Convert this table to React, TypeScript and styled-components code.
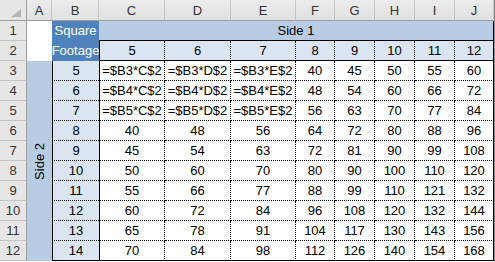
import React from 'react';
import styled, { createGlobalStyle } from 'styled-components';

const GlobalStyle = createGlobalStyle`
    html, body {
        margin: 0;
        padding: 0;
        background: #ffffff;
    }
    * {
        box-sizing: border-box;
    }
`

const Frame = styled.div`
    width: 495px;
    height: 262px;
    overflow: hidden;
    border-right: 1px solid #8c8c8c;
    background: #ffffff;
`

const Sheet = styled.div`
    display: grid;
    grid-template-columns: 27px 25px 47px 66px 66px 65px 39px 40px 40px 40px 39px;
    grid-template-rows: 21px repeat(12, 20px);
    font-family: "Liberation Sans", Arial, sans-serif;
    font-size: 13px;
    color: #000000;
`

type Place = { $row: number; $col: number };

const Corner = styled.div`
    position: relative;
    grid-row: 1;
    grid-column: 1;
    background: #e6e6e6;
    border-right: 1px solid #9e9e9e;
    border-bottom: 1px solid #9e9e9e;
`

const CornerMark = styled.span`
    position: absolute;
    right: 5px;
    bottom: 3px;
    width: 0;
    height: 0;
    border-left: 10px solid transparent;
    border-bottom: 8px solid #b4b4b4;
`

const ColHead = styled.div<{ $col: number }>`
    grid-row: 1;
    grid-column: ${p => p.$col};
    display: flex;
    align-items: center;
    justify-content: center;
    background: linear-gradient(#ececec, #e0e0e0);
    border-right: 1px solid #c4c4c4;
    border-bottom: 1px solid #9e9e9e;
    color: #333333;
`

const RowHead = styled.div<{ $row: number }>`
    grid-column: 1;
    grid-row: ${p => p.$row};
    display: flex;
    align-items: center;
    justify-content: center;
    background: #e6e6e6;
    border-right: 1px solid #9e9e9e;
    border-bottom: 1px solid #c4c4c4;
    color: #333333;
`

const Blank = styled.div`
    grid-column: 2;
    grid-row: 2 / span 2;
    background: #ffffff;
`

const Title = styled.div`
    grid-column: 3;
    grid-row: 2 / span 2;
    display: flex;
    flex-direction: column;
    align-items: center;
    background: #4f81bd;
    color: #ffffff;
    line-height: 20px;
`

const TopBand = styled.div`
    grid-column: 4 / span 8;
    grid-row: 2;
    display: flex;
    align-items: center;
    justify-content: center;
    background: #b8cce4;
    border-bottom: 1px solid #000000;
    border-right: 1px solid #000000;
`

const SideBand = styled.div`
    grid-column: 2;
    grid-row: 4 / span 10;
    display: flex;
    align-items: center;
    justify-content: center;
    background: #b8cce4;
`

const SideLabel = styled.span`
    writing-mode: vertical-rl;
    transform: rotate(180deg);
`

const AxisTop = styled.div<{ $col: number; $first?: boolean; $last?: boolean }>`
    grid-row: 3;
    grid-column: ${p => p.$col};
    display: flex;
    align-items: center;
    justify-content: center;
    background: #dbe5f1;
    border-bottom: 1px solid #000000;
    border-left: ${p => (p.$first ? '1px solid #000000' : 'none')};
    border-right: ${p => (p.$last ? '1px solid #000000' : '1px dotted #000000')};
`

const AxisSide = styled.div<{ $row: number; $last?: boolean }>`
    grid-column: 3;
    grid-row: ${p => p.$row};
    display: flex;
    align-items: center;
    justify-content: center;
    background: #dbe5f1;
    border-left: 1px solid #000000;
    border-bottom: ${p => (p.$last ? '1px solid #000000' : '1px dotted #000000')};
`

const DataCell = styled.div<Place & { $first?: boolean; $lastCol?: boolean; $lastRow?: boolean }>`
    grid-row: ${p => p.$row};
    grid-column: ${p => p.$col};
    display: flex;
    align-items: center;
    justify-content: center;
    white-space: nowrap;
    background: #ffffff;
    border-left: ${p => (p.$first ? '1px solid #000000' : 'none')};
    border-right: ${p => (p.$lastCol ? '1px solid #000000' : '1px dotted #000000')};
    border-bottom: ${p => (p.$lastRow ? '1px solid #000000' : '1px dotted #000000')};
`

const letters = ['A', 'B', 'C', 'D', 'E', 'F', 'G', 'H', 'I', 'J'];
const side1 = [5, 6, 7, 8, 9, 10, 11, 12];
const side2 = [5, 6, 7, 8, 9, 10, 11, 12, 13, 14];

function App() {

    // rows 3-5 of columns C-E show the formula instead of the value
    const cellText = (r: number, c: number) => {
        const row = r + 3;
        if (r < 3 && c < 3) {
            return '=$B' + row + '*' + letters[c + 2] + '$2';
        }
        return String(side2[r] * side1[c]);
    }

    return (
        <Frame>
            <GlobalStyle />
            <Sheet>
                <Corner><CornerMark /></Corner>
                {letters.map((l, i) => (
                    <ColHead key={l} $col={i + 2}>{l}</ColHead>
                ))}

                <RowHead $row={2}>1</RowHead>
                <Blank />
                <Title><span>Square</span><span>Footage</span></Title>
                <TopBand>Side 1</TopBand>

                <RowHead $row={3}>2</RowHead>
                {side1.map((v, c) => (
                    <AxisTop key={'t' + c} $col={c + 4} $first={c === 0} $last={c === side1.length - 1}>
                        {v}
                    </AxisTop>
                ))}

                <SideBand><SideLabel>Side 2</SideLabel></SideBand>
                {side2.map((v, r) => (
                    <React.Fragment key={'row' + r}>
                        <RowHead $row={r + 4}>{r + 3}</RowHead>
                        <AxisSide $row={r + 4} $last={r === side2.length - 1}>{v}</AxisSide>
                        {side1.map((_, c) => (
                            <DataCell
                                key={r + '-' + c}
                                $row={r + 4}
                                $col={c + 4}
                                $first={c === 0}
                                $lastCol={c === side1.length - 1}
                                $lastRow={r === side2.length - 1}
                            >
                                {cellText(r, c)}
                            </DataCell>
                        ))}
                    </React.Fragment>
                ))}
            </Sheet>
        </Frame>
    );
}

export default App;
